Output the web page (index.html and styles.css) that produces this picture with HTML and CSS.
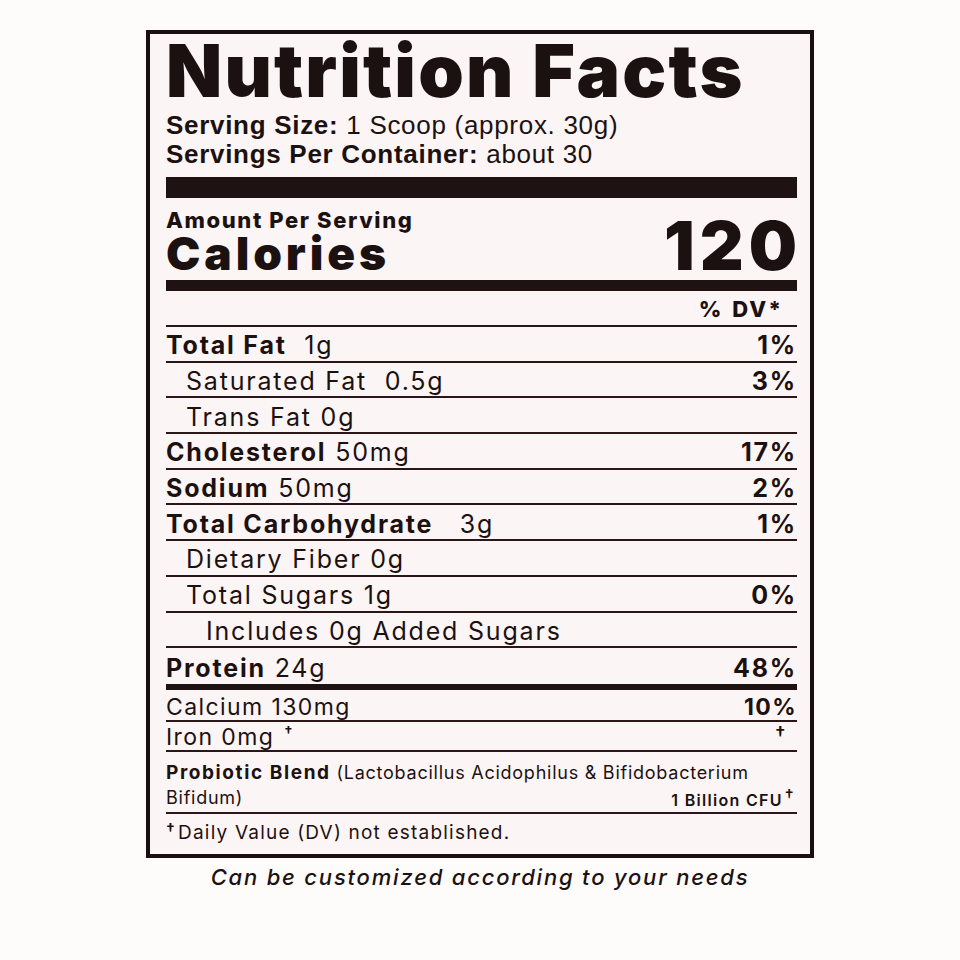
FILE: index.html
```html
<!DOCTYPE html>
<html lang="en">
<head>
<meta charset="utf-8">
<title>Nutrition Facts</title>
<link rel="stylesheet" href="styles.css">
</head>
<body>
<div class="label">
  <h1 class="title">Nutrition Facts</h1>
  <div class="servings">
    <div class="serving"><b>Serving Size:</b> 1 Scoop (approx. 30g)</div>
    <div class="serving"><b>Servings Per Container:</b> about 30</div>
  </div>
  <div class="bar-thick"></div>
  <div class="cal-block">
    <div class="cal-left">
      <div class="amount">Amount Per Serving</div>
      <div class="calories">Calories</div>
    </div>
    <div class="cal-num">120</div>
  </div>
  <div class="bar-mid"></div>
  <div class="dv-head">% DV*</div>
  <div class="row"><span><b>Total Fat</b>&nbsp; 1g</span><b>1%</b></div>
  <div class="row sub"><span>Saturated Fat&nbsp; 0.5g</span><b>3%</b></div>
  <div class="row sub"><span>Trans Fat 0g</span></div>
  <div class="row"><span><b>Cholesterol</b> 50mg</span><b>17%</b></div>
  <div class="row"><span><b>Sodium</b> 50mg</span><b>2%</b></div>
  <div class="row"><span><b>Total Carbohydrate</b>&nbsp;&nbsp; 3g</span><b>1%</b></div>
  <div class="row sub"><span>Dietary Fiber 0g</span></div>
  <div class="row sub"><span>Total Sugars 1g</span><b>0%</b></div>
  <div class="row subsub"><span>Includes 0g Added Sugars</span></div>
  <div class="row last"><span><b>Protein</b> 24g</span><b>48%</b></div>
  <div class="bar-prot"></div>
  <div class="row minor calcium"><span>Calcium 130mg</span><b>10%</b></div>
  <div class="row minor iron"><span>Iron 0mg <span class="dag">†</span></span><span class="dag-r">†</span></div>
  <div class="probiotic">
    <div class="pro-text"><b>Probiotic Blend</b> (Lactobacillus Acidophilus &amp; Bifidobacterium</div>
    <div class="pro-line2"><span>Bifidum)</span><span class="cfu">1 Billion CFU<span class="dag">†</span></span></div>
  </div>
  <div class="foot"><span class="dag">†</span>Daily Value (DV) not established.</div>
</div>
<p class="note">Can be customized according to your needs</p>
</body>
</html>
```

FILE: styles.css
```css
* { box-sizing: border-box; }
html, body { margin: 0; padding: 0; }
body {
  background: #fefbfb;
  color: #1c1111;
  font-family: Inter, "Liberation Sans", sans-serif;
}
.label {
  width: 668px;
  margin: 30px auto 0;
  border: 4px solid #1a0f0f;
  background: #fcf5f5;
  padding: 0 13px 0 16px;
  height: 828px;
}
.title {
  margin: 0;
  font-family: Inter, "Liberation Sans", sans-serif;
  font-weight: 900;
  font-size: 73px;
  line-height: 74px;
  letter-spacing: 2.2px;
}
.servings { margin-top: 3px; }
.serving {
  font-family: "Liberation Sans", Arial, sans-serif;
  font-size: 26px;
  line-height: 29px;
  letter-spacing: 0.7px;
}
.serving b { font-weight: 700; }
.bar-thick {
  height: 21px;
  background: #1e1212;
  margin-top: 8px;
}
.cal-block {
  display: flex;
  justify-content: space-between;
  align-items: flex-end;
  height: 82px;
  padding-bottom: 4px;
}
.amount {
  font-weight: 800;
  font-size: 22px;
  line-height: 22px;
  letter-spacing: 1.6px;
}
.calories {
  font-weight: 900;
  font-size: 46px;
  line-height: 45px;
  letter-spacing: 3.9px;
}
.cal-num {
  font-weight: 900;
  font-size: 68px;
  line-height: 62px;
  letter-spacing: 5px;
  margin-right: -5px;
}
.bar-mid {
  height: 11px;
  background: #1e1212;
}
.dv-head {
  text-align: right;
  font-weight: 800;
  font-size: 22px;
  line-height: 36px;
  height: 36px;
  letter-spacing: 2px;
  word-spacing: 2px;
  padding-right: 14px;
  border-bottom: 2px solid #2a1616;
}
.row {
  display: flex;
  justify-content: space-between;
  align-items: center;
  height: 35.7px;
  padding-top: 3px;
  border-bottom: 2px solid #2a1616;
  font-size: 25px;
  font-weight: 400;
  letter-spacing: 1.8px;
}
.row b { font-weight: 700; }
.row.sub { padding-left: 20px; }
.row.subsub { padding-left: 40px; }
.row.last { border-bottom: none; }
.bar-prot {
  height: 6px;
  background: #1e1212;
}
.row.minor { font-size: 23px; letter-spacing: 1.4px; }
.row.calcium { height: 32px; padding-top: 4px; }
.row.iron { height: 30px; padding-top: 2px; }
.dag { font-size: 15px; position: relative; top: -8px; font-weight: 600; padding-left: 2px; }
.dag-r { font-size: 19px; font-weight: 600; padding-right: 10px; position: relative; top: -3px; }
.probiotic {
  height: 62px;
  border-bottom: 2px solid #2a1616;
  padding-top: 8px;
  font-size: 18px;
  line-height: 25px;
  letter-spacing: 0.75px;
}
.pro-text b { font-weight: 700; font-size: 19px; letter-spacing: 1.6px; }
.pro-line2 {
  display: flex;
  justify-content: space-between;
  align-items: baseline;
}
.cfu {
  font-size: 16px;
  font-weight: 600;
  letter-spacing: 1.3px;
  position: relative;
  top: 2px;
  padding-right: 2px;
}
.cfu .dag { font-size: 17px; top: -4px; font-weight: 500; }
.foot {
  font-size: 19px;
  line-height: 38px;
  letter-spacing: 1.2px;
}
.foot .dag { font-size: 16px; top: -4px; padding-left: 0; padding-right: 2px; }
.note {
  margin: 6px 0 0;
  text-align: center;
  font-style: italic;
  font-weight: 500;
  font-size: 22px;
  letter-spacing: 1.8px;
}
```
